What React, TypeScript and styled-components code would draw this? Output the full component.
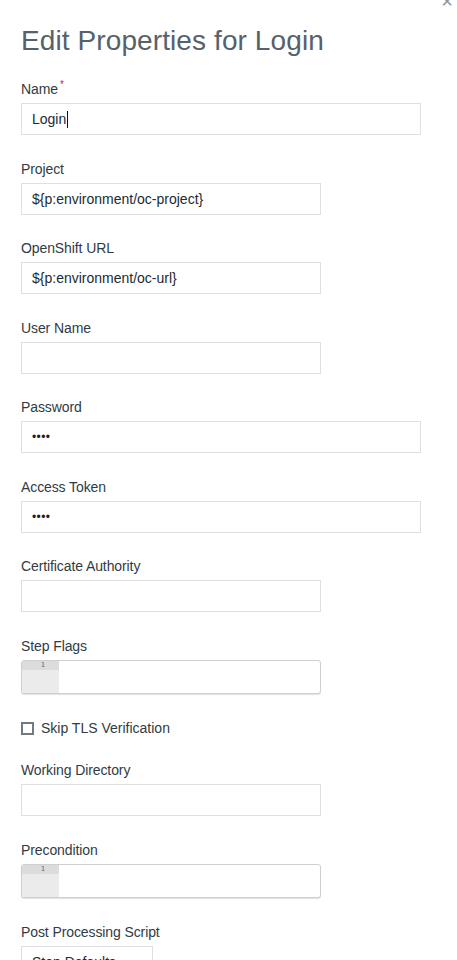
import React from "react";
import styled, { createGlobalStyle } from "styled-components";

const Global = createGlobalStyle`
  html, body { margin: 0; padding: 0; background: #ffffff; }
  body { font-family: "Liberation Sans", Arial, Helvetica, sans-serif; }
  * { box-sizing: border-box; }
`;

const Dialog = styled.div`
  position: relative;
  padding: 25px 0 0 21px;
  width: 457px;
  height: 960px;
  overflow: hidden;
`;

const Close = styled.span`
  position: absolute;
  top: -9px;
  right: 4px;
  font-size: 20px;
  line-height: 20px;
  color: #8a949c;
`;

const Title = styled.h1`
  margin: 0 0 22px 0;
  font-size: 28px;
  line-height: 32px;
  font-weight: normal;
  color: #56616b;
  letter-spacing: 0.1px;
`;

const Field = styled.div<{ $mb?: number }>`
  display: flex;
  flex-direction: column;
  margin-bottom: ${(p) => p.$mb ?? 23.5}px;
`;

const Label = styled.label`
  display: flex;
  align-items: flex-start;
  font-size: 14px;
  line-height: 20px;
  height: 20px;
  margin-bottom: 4px;
  color: #313b44;
  letter-spacing: -0.1px;
`;

const Req = styled.span`
  color: #e02020;
  font-size: 10px;
  line-height: 12px;
  margin-left: 2px;
`;

const Input = styled.div<{ $w: number }>`
  width: ${(p) => p.$w}px;
  height: 32px;
  border: 1px solid #dde0e3;
  display: flex;
  align-items: center;
  padding-left: 10px;
  font-size: 14px;
  color: #222a31;
`;

const Caret = styled.span`
  display: inline-block;
  width: 1px;
  height: 17px;
  background: #111;
  margin-left: 1px;
`;

const Dots = styled.span`
  font-size: 12px;
  letter-spacing: 0.4px;
  color: #222;
`;

const Editor = styled.div`
  width: 300px;
  height: 34px;
  border: 1px solid #cfcfcf;
  border-radius: 3px;
  box-shadow: 0 1px 1px rgba(0, 0, 0, 0.12);
  display: flex;
  overflow: hidden;
  background: #fff;
`;

const Gutter = styled.div`
  width: 37px;
  background: #ebebeb;
  display: flex;
  flex-direction: column;
`;

const LineNo = styled.div`
  height: 9px;
  background: #dcdcdc;
  font-family: "DejaVu Sans Mono", monospace;
  font-size: 7px;
  line-height: 9px;
  color: #666;
  text-align: right;
  padding-right: 14px;
`;

const CheckRow = styled.label`
  display: flex;
  align-items: center;
  height: 20px;
  margin-bottom: 22px;
  font-size: 14px;
  color: #313b44;
  gap: 7px;
`;

const Box = styled.span`
  width: 13px;
  height: 13px;
  border: 2px solid #6f7a83;
  background: #fff;
`;

const Select = styled.div`
  width: 132px;
  height: 32px;
  border: 1px solid #dde0e3;
  display: flex;
  align-items: center;
  justify-content: space-between;
  padding: 0 12px 0 10px;
  font-size: 14px;
  color: #222a31;
`;

const Arrow = styled.span`
  width: 0;
  height: 0;
  border-left: 4px solid transparent;
  border-right: 4px solid transparent;
  border-top: 5px solid #4a86c8;
`;

type F = { label: string; w: number; value?: React.ReactNode; req?: boolean };

const TextField = ({ label, w, value, req }: F) => (
  <Field>
    <Label>
      {label}
      {req && <Req>*</Req>}
    </Label>
    <Input $w={w}>{value}</Input>
  </Field>
);

const CodeField = ({ label }: { label: string }) => (
  <Field $mb={24.5}>
    <Label>{label}</Label>
    <Editor>
      <Gutter>
        <LineNo>1</LineNo>
      </Gutter>
    </Editor>
  </Field>
);

export default function App() {
  return (
    <>
      <Global />
      <Dialog>
        <Close>×</Close>
        <Title>Edit Properties for Login</Title>
        <TextField
          label="Name"
          req
          w={400}
          value={
            <>
              Login
              <Caret />
            </>
          }
        />
        <TextField label="Project" w={300} value="${p:environment/oc-project}" />
        <TextField label="OpenShift URL" w={300} value="${p:environment/oc-url}" />
        <TextField label="User Name" w={300} />
        <TextField label="Password" w={400} value={<Dots>••••</Dots>} />
        <TextField label="Access Token" w={400} value={<Dots>••••</Dots>} />
        <TextField label="Certificate Authority" w={300} />
        <CodeField label="Step Flags" />
        <CheckRow>
          <Box />
          Skip TLS Verification
        </CheckRow>
        <TextField label="Working Directory" w={300} />
        <CodeField label="Precondition" />
        <Field>
          <Label>Post Processing Script</Label>
          <Select>
            Step Defaults
            <Arrow />
          </Select>
        </Field>
      </Dialog>
    </>
  );
}
